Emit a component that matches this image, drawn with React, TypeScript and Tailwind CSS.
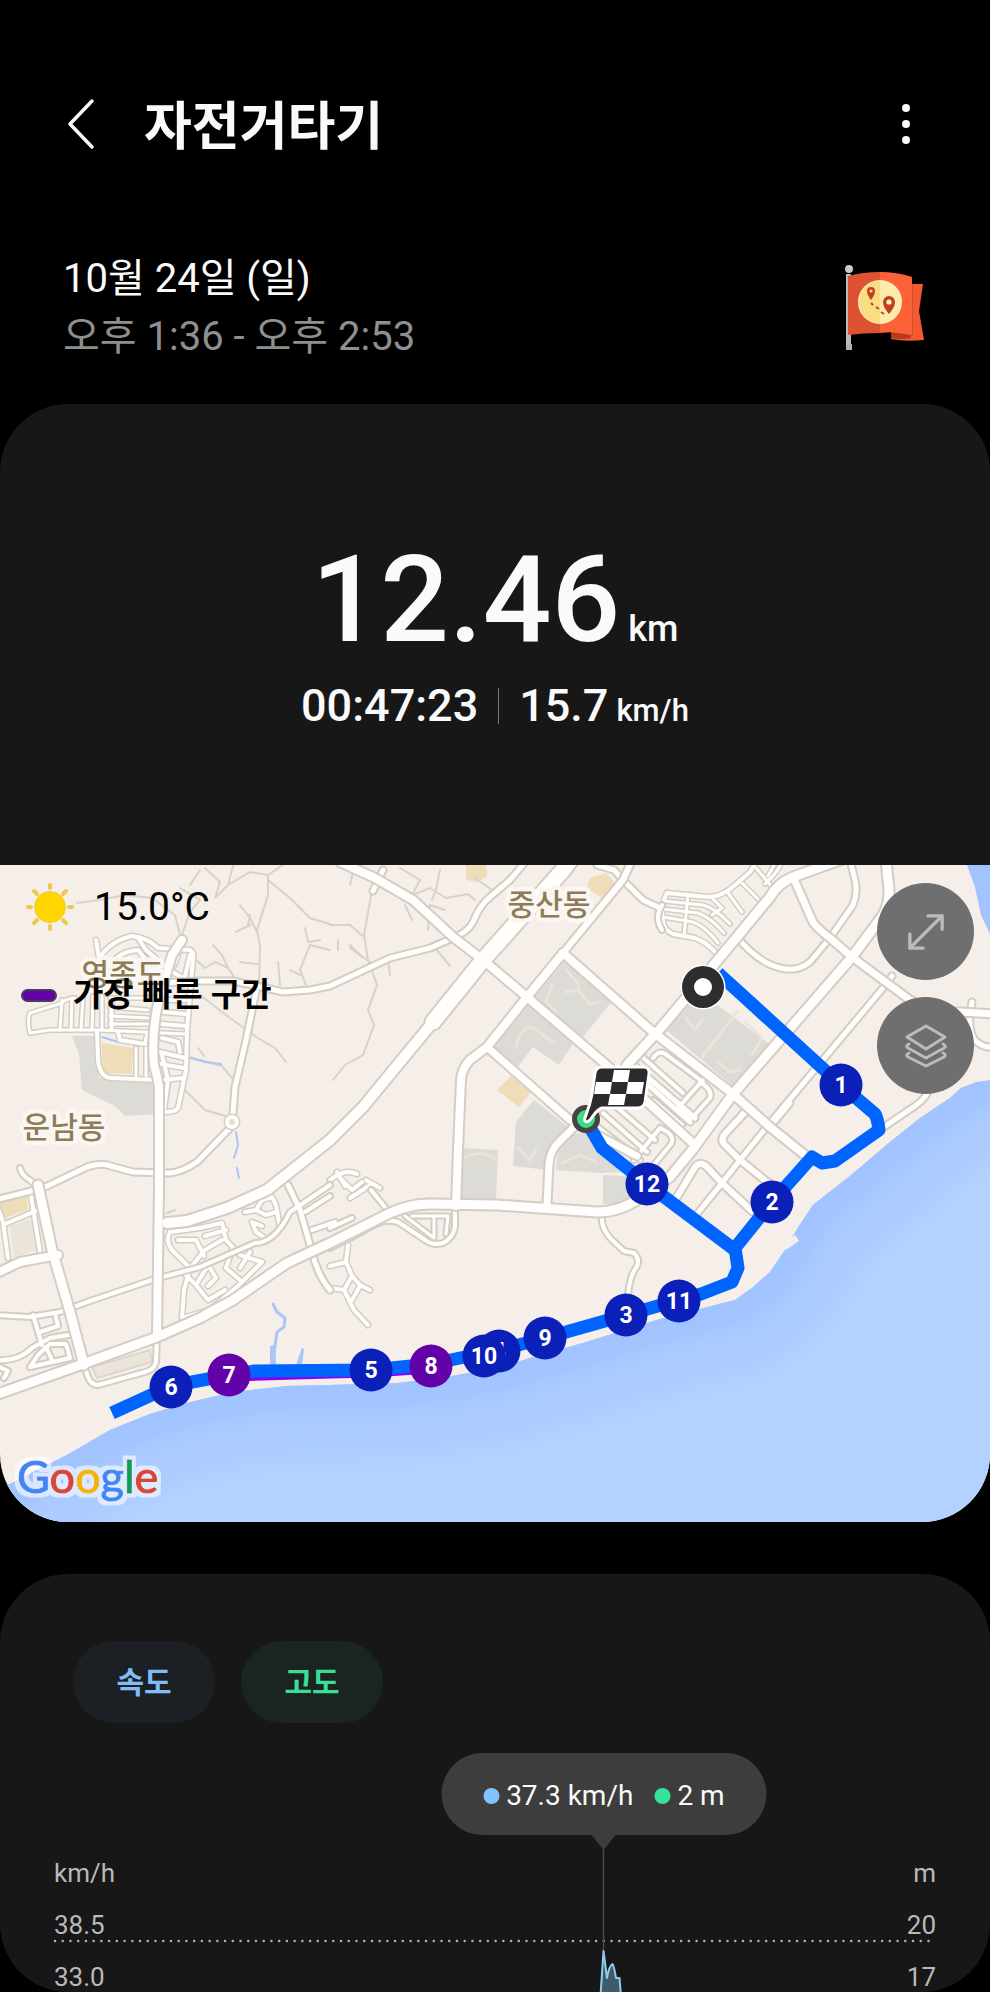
import { useState } from 'react';

type Road = { d: string; w: number };
type Marker = { label: string; x: number; y: number; fast?: boolean };

const COAST =
  'M1000 1079 L977 1082 L961 1088 L950 1098 L920 1118 L890 1142 L850 1176 L832 1190 L813 1205 L799 1226 L793 1236 L785 1250 L770 1272 L752 1288 L735 1300 L700 1309 L660 1319 L583 1343 L540 1355 L497 1368 L440 1378 L397 1383 L330 1385 L287 1386 L233 1392 L187 1403 L150 1414 L110 1430 L67 1455 L33 1472 L10 1484 L-10 1490';

const majorRoads: Road[] = [
  { d: 'M-5 1395 L80 1365 L157 1337 L200 1318 L233 1300 L287 1263 L330 1243 L390 1213 Q410 1204 430 1204 L497 1205 L597 1212 Q620 1212 640 1198 L670 1177 L693 1149 L733 1094 L852 957 L878 922 Q890 908 889 890 L886 860', w: 9 },
  { d: 'M167 1223 L187 1221 L227 1208 L267 1190 L330 1140 L363 1107 L433 1022', w: 10 },
  { d: 'M433 1022 L483 960 L563 870 L572 858', w: 15 },
  { d: 'M340 862 L375 878 L413 900 L453 937 L483 960 L527 997 L603 1062 L695 1145', w: 8 },
  { d: 'M563 953 L653 1032 L733 1094 L770 1127 L811 1160', w: 8 },
  { d: 'M456 1206 L458 1150 L461 1080 Q462 1068 470 1060 L487 1047 L527 997 L563 953', w: 8 },
  { d: 'M563 953 L623 880 L632 860', w: 6 },
  { d: 'M487 1047 L570 1120 L637 1156', w: 7 },
  { d: 'M547 1203 L549 1165 Q550 1150 559 1142 L576 1125', w: 7 },
  { d: 'M627 1065 L660 1029 L737 937 L770 897 Q778 883 793 877 L840 860', w: 9 },
  { d: 'M793 877 L812 920 Q814 926 830 938 L852 957 L887 983 L910 1000 Q930 1012 960 1012 L995 1014', w: 7 },
  { d: 'M157 1337 L159 1190 L159 1087 Q157 1075 154 1065 Q151 1030 160 995 L172 955 L182 940', w: 8 },
  { d: 'M38 1185 L52 1250 L70 1312 L84 1365', w: 9 },
  { d: 'M-5 1274 L20 1262 L58 1255', w: 8 },
];

const streets: Road[] = [
  { d: 'M-5 1200 L43 1188 L87 1167 Q100 1163 107 1165 L133 1172 L170 1173 Q182 1172 197 1162 L232 1126 L235 1087 L246 1040 L257 987', w: 5 },
  { d: 'M20 1168 Q22 1176 30 1180 L38 1188', w: 4 },
  { d: 'M160 983 L200 981 L233 981 L257 986 L283 992 L310 990 L330 986 L360 972 L390 958 L430 948 L453 938', w: 5 },
  { d: 'M453 938 Q468 932 473 922 Q480 905 490 897 L510 880 L527 860', w: 5 },
  { d: 'M373 891 L383 870', w: 5 },
  { d: 'M737 937 Q752 955 767 963 Q793 976 810 962 L830 938 L853 905 Q858 892 855 880 L850 860', w: 5 },
  { d: 'M892 976 L883 988 L770 1123 L740 1160 L722 1183 L697 1214', w: 5 },
  { d: 'M790 1103 L770 1127', w: 5 },
  { d: 'M747 1110 L724 1135 Q720 1141 726 1146 L740 1160 L777 1190', w: 6 },
  { d: 'M677 1197 L695 1167 Q701 1160 708 1168 L722 1183 L752 1211', w: 6 },
  { d: 'M881 1129 L915 1106 Q927 1098 930 1086', w: 5 },
  { d: 'M972 1002 L970 1014 Q968 1036 978 1043 Q985 1048 995 1047', w: 5 },
  { d: 'M597 865 L614 870 L623 880 L643 900 L658 907', w: 5 },
  { d: 'M662 905 Q654 918 662 930', w: 4 },
  { d: 'M640 1055 L683 1093 M653 1058 Q660 1048 668 1056 L703 1082 M703 1080 L678 1108 L692 1118 L710 1098 Q713 1090 700 1082', w: 4 },
  { d: 'M630 1062 L695 1118 M645 1082 L690 1122 M620 1080 L640 1095', w: 5 },
  { d: 'M603 1113 L647 1152 M613 1104 L655 1140 M595 1125 L640 1160 M660 1128 L634 1160 M660 1128 Q676 1135 671 1144 L653 1166', w: 4 },
  { d: 'M653 1100 L682 1125', w: 4 },
  { d: 'M602 1212 L602 1222 Q604 1232 612 1240 L624 1251 L634 1253 Q641 1260 636 1268 Q630 1275 628 1295', w: 4 },
  { d: 'M455 1205 L455 1227 Q453 1238 443 1243 Q433 1246 425 1240 L398 1222 Q385 1218 372 1226 L350 1238 L330 1248', w: 4 },
  { d: 'M405 1216 L434 1238 M412 1216 L448 1216 L446 1234 M434 1216 L434 1238', w: 3 },
  { d: 'M371 1190 L389 1212 M330 1228 L352 1218', w: 4 },
  { d: 'M157 1335 L156 1362 Q154 1370 145 1372 L98 1385 Q91 1385 88 1377 L82 1360', w: 4 },
  { d: 'M-5 1315 L30 1317 L60 1312 L90 1301 L155 1279 L200 1267 L255 1243 Q275 1243 290 1212 L330 1185', w: 4 },
  { d: 'M33 1315 L42 1345 M55 1313 L58 1326 L40 1332 M-5 1360 Q18 1362 32 1348 L50 1338 L74 1334 M30 1367 L38 1355 L50 1344 L66 1344 L70 1358 L30 1367 M46 1347 L52 1360', w: 4 },
  { d: 'M-5 1365 L8 1371 L4 1378', w: 4 },
  { d: 'M288 1185 L300 1210 L312 1252 Q318 1276 330 1290', w: 5 },
  { d: 'M312 1230 L335 1222 M305 1212 L330 1196', w: 4 },
];

const lanes: Road[] = [
  { d: 'M30 1013 L62 1003 Q64 999 75 998 M30 1013 Q27 1020 30 1033 L50 1030 L100 1030 L185 1034', w: 3 },
  { d: 'M62 1000 L60 1030 M72 998 L71 1030 M83 998 L81 1030 M93 996 L92 1030 M102 996 L102 1030 M111 998 L111 1030', w: 3 },
  { d: 'M96 940 L99 958 M99 958 Q112 940 132 936 Q148 938 158 948 L190 950 Q194 952 193 958 L187 1030 L186 1070 L178 1108 Q176 1112 165 1112', w: 4 },
  { d: 'M99 958 L95 975 M108 972 Q114 952 138 950 L150 965 M138 938 L146 950 L160 962 M120 965 L150 978', w: 4 },
  { d: 'M182 940 L176 960 L165 985 M190 955 L183 985 M165 968 L187 980', w: 4 },
  { d: 'M110 998 L155 998 M110 1007 L148 1010 M110 1016 L148 1018 M110 1024 L148 1024 M112 998 L112 1030', w: 3 },
  { d: 'M97 1032 L98 1060 Q100 1078 112 1078 L155 1080 M118 1032 L120 1040 L145 1044 L148 1032', w: 4 },
  { d: 'M136 1048 L136 1076 M146 1048 L146 1076', w: 3 },
  { d: 'M164 1000 L186 1000 M164 1012 L186 1014 M162 1024 L186 1026 M162 1038 L178 1042 L180 1052 M160 1052 L185 1058 M160 1064 L184 1068 M162 1080 L183 1078 M168 1080 L164 1110 M162 1055 L168 1080', w: 4 },
  { d: 'M-5 1200 L3 1222 L8 1258 M31 1196 L40 1252 M5 1224 L38 1210', w: 4 },
  { d: 'M667 893 Q660 905 663 922 Q664 930 673 934 L695 938 Q706 942 715 952', w: 4 },
  { d: 'M667 893 L708 897 Q722 897 735 885 L750 872 L757 860', w: 4 },
  { d: 'M665 901 L703 905 Q715 908 730 924 M663 909 L698 913 Q710 917 724 933 M663 917 L693 922 Q706 927 718 943', w: 3 },
  { d: 'M688 894 L684 936 M742 883 L758 899 M756 868 L772 887 M728 893 L742 912 M712 898 L722 908 L712 915', w: 3 },
  { d: 'M782 862 Q778 872 765 884 M777 860 L768 876', w: 3 },
  { d: 'M170 1232 L200 1228 L222 1223 M170 1232 Q165 1240 172 1250 L190 1268 M178 1240 L196 1240 L204 1256 M222 1223 L226 1240 L240 1255 L262 1262 M222 1240 L205 1250 L190 1268 L184 1290 L182 1318', w: 4 },
  { d: 'M226 1230 L205 1236 M232 1250 L226 1268 L240 1280 M250 1252 L240 1268 M210 1262 L196 1285 L208 1300 L225 1290 M182 1318 L210 1310 L240 1284 L262 1262 M196 1285 L186 1275 M210 1268 L216 1278 L208 1286', w: 4 },
  { d: 'M245 1212 L256 1210 L262 1200 L272 1197 L276 1205 L280 1228 L268 1240 L256 1232 L252 1222 M256 1210 L266 1215 L276 1212 M252 1222 L262 1226', w: 4 },
  { d: 'M348 1245 L346 1262 L352 1276 L360 1285 L370 1290 M330 1266 L338 1264 L346 1262 M330 1288 L344 1290 L352 1276 M344 1290 L354 1310 L368 1325 M352 1300 L360 1286', w: 4 },
  { d: 'M330 1180 Q345 1168 357 1174 M340 1178 L352 1190 L362 1182 M337 1172 L345 1186 M350 1198 L372 1184 M366 1180 L380 1188', w: 4 },
];

const trails = [
  'M205 868 L220 882 L215 898 L228 885 L250 872 L268 875 L290 860 M228 885 L234 862',
  'M77 903 L100 900 L125 895 L152 898 L175 915 L180 935',
  'M268 875 L268 895 L257 930 L260 945 L259 985 M268 880 L290 898 L310 918 L330 924',
  'M240 905 L250 918 L257 932 M236 932 L250 925 M250 915 L248 925',
  'M200 870 L190 885 M180 888 L200 900 L190 912 L181 938',
  'M330 950 L310 945 L300 970 L306 985 M305 928 L308 942 L320 940 M278 962 L280 985 M290 970 L300 975',
  'M196 960 L205 968 L215 962 L228 968 L222 955 L213 945 M228 968 L236 980 M240 962 L257 964',
  'M200 995 L230 1018 L258 1038 L275 1048 L286 1062',
  'M185 1090 L205 1110 L232 1118 M188 1057 L222 1066 L232 1078 M198 1048 L204 1056',
  'M372 890 L364 935 L368 960 L377 985 L368 1010 L374 1025 L363 1055 L345 1065 L333 1080',
  'M330 925 L350 925 L364 937 M350 945 L362 957 M338 940 L338 950',
  'M400 868 L420 880 L412 895 L430 888 L446 898 L468 894 L475 900 M430 905 L445 910 M430 905 L428 930 M440 870 L436 890 L432 900',
  'M475 878 L495 892 M405 905 L412 920 M388 960 L390 975 M437 950 L450 966 M370 962 L350 948',
  'M353 872 L350 885 M167 1213 L175 1210',
];

const fastRoute = 'M232 1375 L330 1372 L371 1371 L431 1367';
const route =
  'M718 973 L841 1085 L875 1114 Q878 1120 879 1130 L835 1161 L822 1163 L812 1157 L772 1202 L735 1248 L738 1268 L732 1282 L701 1294 L679 1300 L626 1315 L545 1338 L499 1350 L431 1364 L371 1370 L255 1371 L229 1375 L171 1386 L112 1413';
const routeEnd = 'M588 1124 L602 1148 L647 1184 L735 1250';

const markers: Marker[] = [
  { label: '1', x: 841, y: 1085 },
  { label: '2', x: 772, y: 1202 },
  { label: '12', x: 647, y: 1184 },
  { label: '11', x: 679, y: 1301 },
  { label: '3', x: 626, y: 1315 },
  { label: '9', x: 545, y: 1338 },
  { label: '4', x: 499, y: 1351 },
  { label: '10', x: 484, y: 1356 },
  { label: '8', x: 431, y: 1366, fast: true },
  { label: '5', x: 371, y: 1370 },
  { label: '7', x: 229, y: 1375, fast: true },
  { label: '6', x: 171, y: 1387 },
];

const places = [
  { name: '중산동', x: 549, y: 915 },
  { name: '영종도', x: 123, y: 985 },
  { name: '운남동', x: 64, y: 1138 },
];

const googleLetters = [
  { ch: 'G', color: '#4285f4' },
  { ch: 'o', color: '#db4437' },
  { ch: 'o', color: '#f4b400' },
  { ch: 'g', color: '#4285f4' },
  { ch: 'l', color: '#0f9d58' },
  { ch: 'e', color: '#db4437' },
];

function RoadLayer({ roads, edge }: { roads: Road[]; edge: number }) {
  return (
    <g fill="none" strokeLinecap="round" strokeLinejoin="round">
      {roads.map((road) => (
        <path key={road.d} d={road.d} stroke="#d3cec3" strokeWidth={road.w + edge} />
      ))}
      {roads.map((road) => (
        <path key={road.d} d={road.d} stroke="#fffefc" strokeWidth={road.w} />
      ))}
    </g>
  );
}

function RouteMap() {
  return (
    <svg viewBox="0 865 990 657" className="block h-auto w-full" role="img" aria-label="경로 지도">
      <defs>
        <clipPath id="sea">
          <path d={`${COAST} L-10 1530 L1000 1530 Z`} />
        </clipPath>
        <filter id="soft" x="-10%" y="-10%" width="120%" height="120%">
          <feGaussianBlur stdDeviation="9" />
        </filter>
        <filter id="halo" x="-10%" y="-20%" width="120%" height="140%">
          <feMorphology in="SourceAlpha" operator="dilate" radius="4" result="grown" />
          <feFlood floodColor="#fff" floodOpacity="0.6" />
          <feComposite in2="grown" operator="in" />
          <feMerge>
            <feMergeNode />
            <feMergeNode in="SourceGraphic" />
          </feMerge>
        </filter>
      </defs>

      <rect x="0" y="865" width="990" height="657" fill="#f6eee8" />

      <g fill="#dddbd5">
        <path d="M72 1036 L98 1036 L99 1078 L152 1082 L156 1114 L125 1116 L115 1106 L82 1090 L79 1054 Z" />
        <path d="M564 962 L612 1001 L583 1037 L534 998 Z" />
        <path d="M527 1005 L574 1042 L559 1065 L533 1047 L518 1067 L493 1049 Z" />
        <path d="M534 1100 L569 1128 L552 1148 L547 1170 L513 1166 L516 1122 Z" />
        <path d="M572 1135 L590 1130 L606 1156 L627 1172 L600 1173 L556 1170 L558 1150 Z" />
        <path d="M463 1148 L498 1150 L496 1200 L461 1199 Z" />
        <path d="M603 1175 L628 1176 L640 1195 L622 1205 L603 1204 Z" />
        <path d="M665 1029 L700 992 L772 1046 L734 1087 Z" />
      </g>
      <g fill="none" stroke="#ece3da" strokeWidth="3" strokeLinecap="round">
        <path d="M552 985 L546 1002 L556 1012 M566 970 Q582 985 578 990 L566 992 M578 990 L590 1004 L598 1002" />
        <path d="M516 1046 Q522 1024 534 1028 L554 1043 M702 1057 L737 1012 M745 1022 L762 1038 L752 1055" />
        <path d="M686 1018 L695 1030 L702 1020 M718 1062 L730 1072 L740 1070" />
        <path d="M518 1148 L530 1160 L536 1150 M562 1163 L580 1155 L596 1162" />
        <path d="M465 1158 Q480 1148 496 1160" />
      </g>
      <g fill="#efddba">
        <path d="M102 1043 L133 1048 L132 1074 L102 1073 Z" />
        <path d="M466 865 L486 865 L487 876 L478 882 L466 880 Z" />
        <path d="M590 878 L606 873 L615 883 L602 898 L586 888 Z" />
        <path d="M511 1076 L531 1092 L519 1107 L497 1090 Z" />
        <path d="M-2 1200 L27 1196 L28 1210 L5 1218 L-2 1216 Z" />
      </g>
      <path d="M10 1226 L34 1218 L37 1250 L14 1258 Z" fill="#ebe4db" />
      <path d="M92 1367 L150 1350 L152 1362 L97 1378 Z" fill="#ebe4db" stroke="#ddd6cb" strokeWidth="2" />

      <g fill="none" stroke="#d8d3c9" strokeWidth="2" strokeLinecap="round">
        {trails.map((d) => (
          <path key={d} d={d} />
        ))}
      </g>
      <g fill="none" stroke="#a9c6f7" strokeLinecap="round">
        <path d="M102 1037 L118 1042 M188 1057 L205 1062 L221 1064" strokeWidth="2" />
        <path d="M236 1132 L238 1145 L234 1158 M237 1168 L239 1178" strokeWidth="2" />
        <path d="M273 1304 L277 1312 L285 1318 L284 1327 L277 1332 L275 1346 L273 1363" strokeWidth="3" />
      </g>
      <path d="M270 1346 L275 1345 L276 1366 L270 1366 Z M302 1348 L304 1349 L302 1365 L296 1365 Z" fill="#a9c6f7" />

      <RoadLayer roads={lanes} edge={3} />
      <RoadLayer roads={streets} edge={4} />
      <RoadLayer roads={majorRoads} edge={4} />
      <circle cx="232" cy="1122" r="5" fill="#e5ded4" stroke="#d3cec3" strokeWidth="7" />
      <circle cx="232" cy="1122" r="5" fill="#e5ded4" stroke="#fffefc" strokeWidth="4" />

      <g clipPath="url(#sea)">
        <rect x="0" y="865" width="990" height="657" fill="#b3d2ff" />
        <path d={COAST} fill="none" stroke="#acccff" strokeWidth="150" filter="url(#soft)" />
        <path d={COAST} fill="none" stroke="#a1c3ff" strokeWidth="56" filter="url(#soft)" />
      </g>
      <path d="M967 865 L975 887 L981 915 L990 934 L990 865 Z" fill="#a1c3ff" />
      <path d="M784 1247 L797 1238" stroke="#f6eee8" strokeWidth="7" />

      <g
        fill="#8d7c57"
        stroke="#faf6f2"
        strokeWidth="9"
        strokeLinejoin="round"
        paintOrder="stroke"
        textAnchor="middle"
        className="text-[30px] font-medium"
      >
        {places.map((place) => (
          <text key={place.name} x={place.x} y={place.y}>
            {place.name}
          </text>
        ))}
      </g>

      <g fill="none" strokeLinejoin="round">
        <path d={fastRoute} stroke="#8a00f0" strokeWidth="13" />
        <path d={route} stroke="#0064ff" strokeWidth="13" />
        <path d={routeEnd} stroke="#0064ff" strokeWidth="13" />
      </g>

      {markers.map((marker) => (
        <g key={marker.label}>
          <circle cx={marker.x} cy={marker.y} r="21.5" fill={marker.fast ? '#6402aa' : '#0b20b8'} />
          <text x={marker.x} y={marker.y + 8} textAnchor="middle" fill="#fff" className="text-[23px] font-bold">
            {marker.label}
          </text>
        </g>
      ))}

      <circle cx="703" cy="987" r="22.5" fill="#fff" />
      <circle cx="703" cy="987" r="21" fill="#2e2e2e" />
      <circle cx="703" cy="987" r="9" fill="#fff" />

      <circle cx="586" cy="1119" r="11.5" fill="#3ddc84" stroke="#444" strokeWidth="5" />
      <path
        d="M602 1067 H643 Q650 1067 649 1074 L645 1102 Q644 1108 637 1108 H602 Q597 1110 593 1116 Q588 1124 585 1121 Q584 1119 586 1115 Q590 1105 592 1094 L595 1073 Q596 1067 602 1067 Z"
        fill="#2b2b2b"
        stroke="#fff"
        strokeWidth="3"
      />
      <g fill="#fff">
        <path d="M614 1070 H630 L628 1082 H612 Z" />
        <path d="M596 1082 H612 L610 1094 H594 Z" />
        <path d="M628 1082 H644 L642 1094 H626 Z" />
        <path d="M610 1094 H626 L624 1105 H608 Z" />
      </g>

      <text x="17" y="1493" filter="url(#halo)" className="font-['Lato',sans-serif] text-[45px]">
        {googleLetters.map((letter, i) => (
          <tspan key={i} fill={letter.color} stroke={letter.color}>
            {letter.ch}
          </tspan>
        ))}
      </text>
    </svg>
  );
}

function FlagBadge() {
  return (
    <svg viewBox="0 0 80 88" className="h-[88px] w-20" role="img" aria-label="경로 배지">
      <path d="M64 20 L78 20 L74 47 L79 76 Q60 78 46 75 L46 62 L64 62 Z" fill="#f4592f" />
      <path d="M46 68 L66 71 L66 74 Q56 76 46 74 Z" fill="#b53a1c" />
      <path d="M64 20 L68 20 L68 71 L64 71 Z" fill="#d94d28" />
      <rect x="1" y="10" width="5" height="72" fill="#b9bdc0" />
      <circle cx="4" cy="5" r="4" fill="#c9cccf" />
      <rect x="1" y="80" width="6" height="6" fill="#aeb2b5" />
      <path d="M3 12 Q18 8 35 8 V69 Q18 69 3 71 Z" fill="#dd5230" />
      <path d="M35 8 Q52 8 67 13 V71 Q52 67 35 69 Z" fill="#fc6138" />
      <circle cx="35" cy="38" r="22" fill="#fff0c0" />
      <path d="M35 17 A21 21 0 0 0 35 59 Z" fill="#f8dd83" />
      <path d="M35 17 A21 21 0 0 1 35 59 Z" fill="#fcebaa" />
      <path d="M26 36 Q22 31 22 27 A4 4 0 0 1 30 27 Q30 31 26 36 Z" fill="#c2401c" />
      <circle cx="26" cy="27" r="1.6" fill="#f8dd83" />
      <path d="M44 50 Q38 43 38 38 A6 6 0 0 1 50 38 Q50 43 44 50 Z" fill="#c2401c" />
      <circle cx="44" cy="38" r="2.6" fill="#fff4c8" />
      <path d="M26 39 L28 41 M31 43 L34 45 M36 48 L39 50" stroke="#c2401c" strokeWidth="2" />
    </svg>
  );
}

function SunIcon() {
  return (
    <svg viewBox="0 0 48 48" className="size-12" aria-hidden="true">
      <circle cx="24" cy="24" r="15.5" fill="#ffd500" stroke="#f0cd3a" />
      <path
        d="M24 2V5 M24 43V46 M2 24H5 M43 24H46 M8 8L11 11 M37 37L40 40 M8 40L11 37 M37 11L40 8"
        stroke="#ecc94e"
        strokeWidth="4"
        strokeLinecap="round"
      />
    </svg>
  );
}

function TopBar() {
  return (
    <header className="flex h-16 items-center pl-16 pr-[74px]">
      <button aria-label="뒤로" className="flex h-16 w-8 items-center justify-center pb-1">
        <svg viewBox="0 0 32 52" className="h-[52px] w-8" fill="none" stroke="#fafafa" strokeWidth="3.5" strokeLinecap="round" strokeLinejoin="round">
          <path d="M28 3 L6 26 L28 49" />
        </svg>
      </button>
      <h1 className="ml-12 pt-1 text-[52px] leading-[64px] font-bold text-[#fafafa]">자전거타기</h1>
      <button aria-label="옵션 더보기" className="ml-auto flex h-16 w-5 flex-col items-center justify-center gap-2 pb-1">
        <span className="size-2 rounded-full bg-[#fafafa]" />
        <span className="size-2 rounded-full bg-[#fafafa]" />
        <span className="size-2 rounded-full bg-[#fafafa]" />
      </button>
    </header>
  );
}

function ChartPanel() {
  const [showSpeed, setShowSpeed] = useState(true);
  const [showAltitude, setShowAltitude] = useState(true);

  return (
    <section className="mt-[52px] h-[418px] overflow-hidden rounded-[68px] bg-[#171717] pt-[67px]">
      <div className="flex gap-[26px] pl-[73px]">
        <button
          aria-pressed={showSpeed}
          onClick={() => setShowSpeed(!showSpeed)}
          className="h-[82px] w-[142px] rounded-full bg-[#1c2024] text-[30px] font-bold text-[#7fbdf5]"
        >
          속도
        </button>
        <button
          aria-pressed={showAltitude}
          onClick={() => setShowAltitude(!showAltitude)}
          className="h-[82px] w-[142px] rounded-full bg-[#1a2420] text-[30px] font-bold text-[#3ddc97]"
        >
          고도
        </button>
      </div>

      <div className="relative mt-[30px] pt-[94px]">
        <svg viewBox="0 0 990 240" className="absolute inset-x-0 top-0 w-full" aria-hidden="true">
          <path d="M55 188 H936" stroke="#b4b4b4" strokeWidth="2.5" strokeDasharray="0 7.73" strokeLinecap="round" />
          <path d="M603.5 90 V200" stroke="#4a4a4a" strokeWidth="1.5" />
          <path
            d="M600 250 L603.5 198 L607 225 Q609 213 612.5 211 Q614 213 616 225 L619.5 225 L621.5 250 Z"
            fill="#3f5b69"
            stroke="#8fcdf0"
            strokeWidth="2"
            strokeLinejoin="round"
          />
        </svg>

        <div className="absolute top-0 left-[61%] -translate-x-1/2">
          <div className="flex h-[82px] w-[325px] items-center justify-center gap-[21px] rounded-full bg-[#3d3d3d] pt-1 text-[28px] text-[#fafafa]">
            <span className="flex items-center gap-[7px]">
              <span className="size-4 rounded-full bg-[#7fc4ff]" />
              37.3 km/h
            </span>
            <span className="flex items-center gap-[7px]">
              <span className="size-4 rounded-full bg-[#35e29b]" />2 m
            </span>
          </div>
          <svg viewBox="0 0 24 15" className="mx-auto block h-[15px] w-6" aria-hidden="true">
            <path d="M0 0 H24 L12 15 Z" fill="#3d3d3d" />
          </svg>
        </div>

        <div className="flex justify-between px-[54px] text-[26px] leading-[52px] text-[#b9b9b9]">
          <div>
            <p>km/h</p>
            <p>38.5</p>
            <p>33.0</p>
          </div>
          <div className="text-right">
            <p>m</p>
            <p>20</p>
            <p>17</p>
          </div>
        </div>
      </div>
    </section>
  );
}

export default function App() {
  return (
    <main className="min-h-screen bg-black pt-[94px] font-['Roboto','Noto_Sans_CJK_KR',sans-serif]">
      <TopBar />

      <div className="mt-[92px] flex items-center justify-between pb-[38px] pr-[65px] pl-[63px] text-[40px] leading-[58px]">
        <div>
          <p className="text-[#fafafa]">10월 24일 (일)</p>
          <p className="text-[#8f8f8f]">오후 1:36 - 오후 2:53</p>
        </div>
        <FlagBadge />
      </div>

      <section className="overflow-hidden rounded-[68px] bg-[#171717]">
        <div className="flex h-[461px] flex-col items-center pt-[135px] text-[#fafafa]">
          <p className="flex items-baseline gap-2 text-[121px] leading-[122px] font-medium">
            12.46
            <span className="text-[36px] leading-none">km</span>
          </p>
          <div className="mt-[18px] flex items-center text-[45px] leading-[54px] font-medium">
            <span>00:47:23</span>
            <span className="mx-5 h-9 w-px bg-[#777]" />
            <span className="flex items-baseline gap-2">
              15.7
              <span className="text-[31px] leading-none">km/h</span>
            </span>
          </div>
        </div>

        <div className="relative">
          <RouteMap />
          <div className="absolute inset-0 flex items-start justify-between pt-[18px] pr-4 pl-5 text-black">
            <div>
              <div className="flex h-12 items-center gap-5 pl-[6px] text-[39px]">
                <SunIcon />
                15.0°C
              </div>
              <div className="mt-[42px] flex h-11 items-center gap-4 pl-px text-[33px] font-bold">
                <span className="h-[13px] w-9 rounded-full border-2 border-[#4a3a5c] bg-[#6402aa]" />
                가장 빠른 구간
              </div>
            </div>
            <div className="flex flex-col gap-[17px]">
              <button aria-label="지도 확대" className="flex size-[97px] items-center justify-center rounded-full bg-[#6f6f6f]">
                <svg viewBox="0 0 40 40" className="size-[38px]" fill="none" stroke="#bcbcbc" strokeWidth="3.5" strokeLinecap="round" strokeLinejoin="round">
                  <path d="M3 37 L37 3 M22 3 H37 V17 M3 22 V37 H17" />
                </svg>
              </button>
              <button aria-label="지도 유형" className="flex size-[97px] items-center justify-center rounded-full bg-[#6f6f6f]">
                <svg viewBox="0 0 44 44" className="size-11" fill="none" stroke="#bcbcbc" strokeWidth="3" strokeLinecap="round" strokeLinejoin="round">
                  <path d="M22 2 L41 13 L22 25 L3 13 Z" />
                  <path d="M5 20 Q1 22 4 24 L22 34 L40 24 Q43 22 39 20" />
                  <path d="M5 29 Q1 31 4 33 L22 42 L40 33 Q43 31 39 29" />
                </svg>
              </button>
            </div>
          </div>
        </div>
      </section>

      <ChartPanel />
    </main>
  );
}
